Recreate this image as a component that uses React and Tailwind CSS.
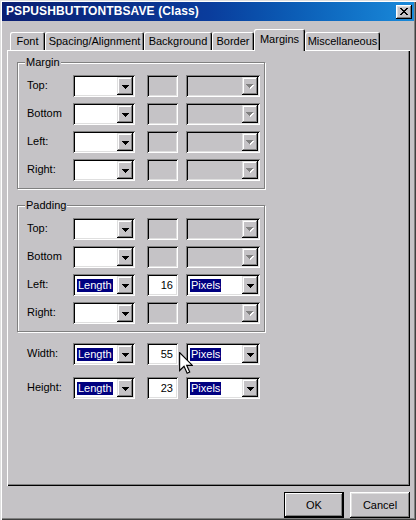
import React from "react";

const BG = "bg-[#c5c3c6]";

function Arrow({ disabled }) {
  if (disabled) {
    return (
      <svg width="8" height="5" viewBox="0 0 8 5" shapeRendering="crispEdges">
        <polygon points="1,1 8,1 4.5,5" fill="#ffffff" />
        <polygon points="0,0 7,0 3.5,4" fill="#808080" />
      </svg>
    );
  }
  return (
    <svg width="7" height="4" viewBox="0 0 7 4" shapeRendering="crispEdges">
      <polygon points="0,0 7,0 3.5,4" fill="#000000" />
    </svg>
  );
}

function DropButton({ disabled }) {
  return (
    <div className="flex w-[16px] items-center justify-center bg-[#c5c3c6] pt-[1px] shadow-[inset_-1px_-1px_#000000,inset_1px_1px_#dfdfdf,inset_-2px_-2px_#808080,inset_2px_2px_#ffffff]">
      <Arrow disabled={disabled} />
    </div>
  );
}

function Combo({ width, value, disabled }) {
  return (
    <div
      className={`flex h-[22px] items-stretch p-[2px] shadow-[inset_1px_1px_#808080,inset_-1px_-1px_#ffffff,inset_2px_2px_#000000,inset_-2px_-2px_#dfdfdf] ${width} ${
        disabled ? "bg-[#c5c3c6]" : "bg-white"
      }`}
    >
      <div className="flex flex-1 items-center pl-[2px]">
        {value ? (
          <span className="bg-[#000080] px-[1px] leading-[13px] text-white">{value}</span>
        ) : null}
      </div>
      <DropButton disabled={disabled} />
    </div>
  );
}

function Box({ value }) {
  return (
    <div
      className={`flex h-[22px] w-[31px] items-center justify-end pr-[5px] shadow-[inset_1px_1px_#808080,inset_-1px_-1px_#ffffff,inset_2px_2px_#000000,inset_-2px_-2px_#dfdfdf] ${
        value ? "bg-white" : "bg-[#c5c3c6]"
      }`}
    >
      {value}
    </div>
  );
}

function Row({ label, active, num }) {
  return (
    <div className="flex h-[22px] items-center">
      <div className="w-[46px] pb-[2px]">{label}</div>
      <Combo width="w-[62px]" value={active ? "Length" : null} />
      <div className="ml-[12px]">
        <Box value={active ? num : null} />
      </div>
      <div className="ml-[8px]">
        <Combo width="w-[74px]" value={active ? "Pixels" : null} disabled={!active} />
      </div>
    </div>
  );
}

function Group({ title, children, extra }) {
  return (
    <div
      className={`relative w-[248px] border border-[#808080] shadow-[inset_1px_1px_#ffffff,1px_1px_#ffffff] ${extra}`}
    >
      <span className="absolute left-[7px] top-[-8px] bg-[#c5c3c6] px-[1px] leading-[14px]">
        {title}
      </span>
      <div className="flex flex-col gap-[6px] pb-[7px] pl-[9px] pt-[12px]">{children}</div>
    </div>
  );
}

function Tab({ label, width, active }) {
  if (active) {
    return (
      <div
        className={`relative z-10 mb-[-1px] flex h-[22px] items-start justify-center rounded-tl-[2px] rounded-tr-[2px] bg-[#c5c3c6] pt-[4px] shadow-[inset_1px_1px_#ffffff,inset_-1px_0_#000000,inset_-2px_0_#808080] ${width}`}
      >
        {label}
      </div>
    );
  }
  return (
    <div
      className={`flex h-[18px] items-start justify-center rounded-tl-[2px] rounded-tr-[2px] bg-[#c5c3c6] pt-[3px] shadow-[inset_1px_1px_#ffffff,inset_-1px_0_#000000,inset_-2px_0_#808080] ${width}`}
    >
      {label}
    </div>
  );
}

function Cursor() {
  return (
    <svg
      className="absolute left-[179px] top-[352px]"
      width="14"
      height="22"
      viewBox="0 0 12 19"
    >
      <path
        d="M0.5,0.5 L0.5,16 L4.3,12.3 L7,18.3 L9.2,17.3 L6.6,11.5 L11.5,11.5 Z"
        fill="#ffffff"
        stroke="#000000"
        strokeWidth="1"
        strokeLinejoin="miter"
      />
    </svg>
  );
}

export default function App() {
  return (
    <div
      className={`relative h-[520px] w-[416px] overflow-hidden ${BG} p-[2px] font-['Liberation_Sans',Arial,sans-serif] text-[11px] leading-[13px] text-black shadow-[inset_1px_1px_#dfdfdf,inset_2px_2px_#ffffff,inset_-1px_-1px_#404040,inset_-2px_-2px_#808080]`}
    >
      {/* Title bar */}
      <div className="flex h-[19px] items-center justify-between bg-gradient-to-r from-[#0a1e72] via-[#0a3c9c] to-[#1a8ada] pl-[4px] pr-[2px]">
        <span className="text-[12px] font-bold tracking-[0.1px] text-white">
          PSPUSHBUTTONTBSAVE (Class)
        </span>
        <div className="flex h-[14px] w-[16px] items-center justify-center bg-[#c5c3c6] shadow-[inset_-1px_-1px_#000000,inset_1px_1px_#ffffff,inset_-2px_-2px_#808080,inset_2px_2px_#dfdfdf]">
          <svg width="8" height="7" viewBox="0 0 8 7" shapeRendering="crispEdges">
            <path d="M0,0 L2,0 L4,2.5 L6,0 L8,0 L5,3.5 L8,7 L6,7 L4,4.5 L2,7 L0,7 L3,3.5 Z" fill="#000000" />
          </svg>
        </div>
      </div>

      {/* Tabs */}
      <div className="ml-[5px] mt-[8px] w-[403px]">
        <div className="flex h-[21px] items-end pl-[3px]">
          <Tab label="Font" width="w-[35px]" />
          <Tab label="Spacing/Alignment" width="w-[99px]" />
          <Tab label="Background" width="w-[68px]" />
          <Tab label="Border" width="w-[42px]" />
          <Tab label="Margins" width="w-[51px]" active />
          <Tab label="Miscellaneous" width="w-[75px]" />
        </div>

        {/* Panel */}
        <div className="flex h-[436px] flex-col pl-[10px] pt-[12px] shadow-[inset_1px_1px_#ffffff,inset_-1px_-1px_#000000,inset_-2px_-2px_#808080]">
          <Group title="Margin" extra="">
            <Row label="Top:" />
            <Row label="Bottom" />
            <Row label="Left:" />
            <Row label="Right:" />
          </Group>
          <Group title="Padding" extra="mt-[16px]">
            <Row label="Top:" />
            <Row label="Bottom" />
            <Row label="Left:" active num="16" />
            <Row label="Right:" />
          </Group>
          <div className="mt-[11px] flex flex-col gap-[12px] pl-[10px]">
            <Row label="Width:" active num="55" />
            <Row label="Height:" active num="23" />
          </div>
        </div>

        {/* Buttons */}
        <div className="mt-[6px] flex justify-end gap-[6px]">
          <div className="flex h-[26px] w-[60px] items-center justify-center border border-black bg-[#c5c3c6] shadow-[inset_-1px_-1px_#000000,inset_1px_1px_#ffffff,inset_-2px_-2px_#808080]">
            OK
          </div>
          <div className="flex h-[26px] w-[60px] items-center justify-center bg-[#c5c3c6] shadow-[inset_-1px_-1px_#000000,inset_1px_1px_#ffffff,inset_-2px_-2px_#808080,inset_2px_2px_#dfdfdf]">
            Cancel
          </div>
        </div>
      </div>

      <Cursor />
    </div>
  );
}
